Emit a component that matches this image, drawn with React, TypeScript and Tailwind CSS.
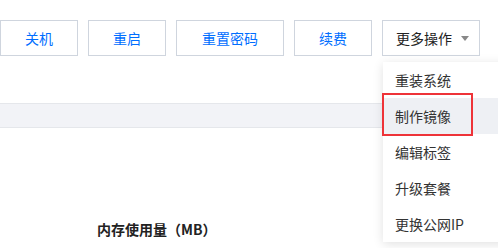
const buttons = [
  { label: "关机", width: "w-[78px]" },
  { label: "重启", width: "w-[78px]" },
  { label: "重置密码", width: "w-[108px]" },
  { label: "续费", width: "w-[78px]" },
];

const menuItems = ["重装系统", "制作镜像", "编辑标签", "升级套餐", "更换公网IP"];

export default function App() {
  return (
    <div className="relative h-[248px] w-[498px] overflow-hidden bg-white font-['Noto_Sans_CJK_SC','Noto_Sans',sans-serif] text-[14px]">
      {/* action bar */}
      <div className="flex gap-[10px] pt-[20px]">
        {buttons.map((b) => (
          <button
            key={b.label}
            type="button"
            className={`${b.width} flex h-[36px] items-center justify-center border border-[#cfd5de] bg-white text-[#006eff]`}
          >
            {b.label}
          </button>
        ))}
        <button
          type="button"
          className="flex h-[36px] w-[98px] items-center gap-[9px] border border-[#cfd5de] bg-white pl-[13px] text-[#222]"
        >
          更多操作
          <span className="h-0 w-0 border-x-[4px] border-t-[5px] border-x-transparent border-t-[#888]" />
        </button>
      </div>

      {/* table header strip */}
      <div className="mt-[47px] h-[25px] border-t border-b border-[#e5e7eb] bg-[#f2f3f7]" />

      <div className="mt-[91px] pl-[97px] text-[14px] font-bold text-[#222]">
        内存使用量（MB）
      </div>

      {/* dropdown menu */}
      <div className="absolute left-[383px] top-[62px] w-[140px] bg-white shadow-[0_2px_10px_rgba(0,0,0,0.12)]">
        {menuItems.map((item, i) => (
          <div
            key={item}
            className={`flex h-[36px] items-center pl-[12px] text-[#333] ${i === 1 ? "bg-[#eef0f4]" : ""}`}
          >
            {item}
          </div>
        ))}
      </div>
      <div className="absolute left-[382px] top-[93px] h-[43px] w-[91px] border-2 border-[#ee3338]" />
    </div>
  );
}
